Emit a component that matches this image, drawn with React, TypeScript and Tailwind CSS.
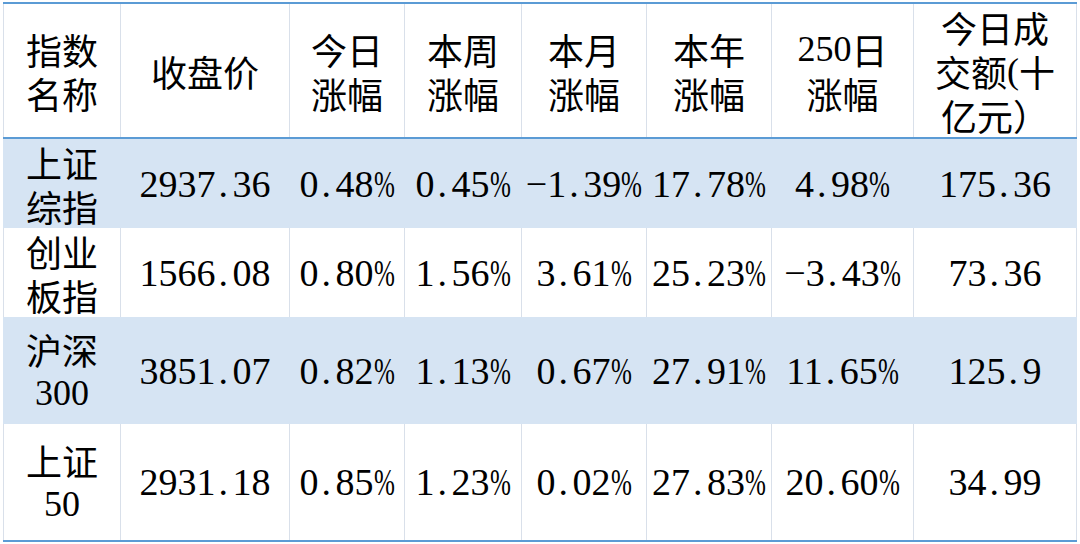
const cols = 'grid grid-cols-[117px_169px_115px_117px_125px_125px_142px_164px]';

const header: string[][] = [
  ['指数', '名称'],
  ['收盘价'],
  ['今日', '涨幅'],
  ['本周', '涨幅'],
  ['本月', '涨幅'],
  ['本年', '涨幅'],
  ['250日', '涨幅'],
  ['今日成', '交额(十', '亿元）'],
];

const rows = [
  { name: ['上证', '综指'], values: ['2937.36', '0.48%', '0.45%', '−1.39%', '17.78%', '4.98%', '175.36'], blue: true, h: 'h-[89px]' },
  { name: ['创业', '板指'], values: ['1566.08', '0.80%', '1.56%', '3.61%', '25.23%', '−3.43%', '73.36'], blue: false, h: 'h-[89px]' },
  { name: ['沪深', '300'], values: ['3851.07', '0.82%', '1.13%', '0.67%', '27.91%', '11.65%', '125.9'], blue: true, h: 'h-[107px]' },
  { name: ['上证', '50'], values: ['2931.18', '0.85%', '1.23%', '0.02%', '27.83%', '20.60%', '34.99'], blue: false, h: 'h-[118px] border-b-2 border-b-[#5b9bd5]' },
];

// split latin runs into serif spans so digits keep the serif look
function Mixed({ text }: { text: string }) {
  const parts = text.split(/([0-9.()%−-]+)/).filter(Boolean);
  return (
    <>
      {parts.map((p, i) =>
        /[0-9.()%−-]/.test(p) ? (
          <span key={i} className="inline-block leading-[44px] font-['Liberation_Serif',serif]">{p}</span>
        ) : (
          <span key={i} className="inline-block leading-[44px] font-['Noto_Sans_CJK_SC',sans-serif]">{p}</span>
        )
      )}
    </>
  );
}

// numbers drawn like a half-width song font: wide period, narrow percent sign
function Num({ value }: { value: string }) {
  return (
    <span className="font-['Liberation_Serif',serif] text-[38px] leading-none whitespace-nowrap">
      {value.split('').map((c, i) => {
        if (c === '.') return <span key={i} className="inline-block w-[17px] pl-[3px]">.</span>;
        if (c === '%')
          return (
            <span key={i} className="inline-block w-[21px]">
              <span className="inline-block scale-x-[0.66] origin-left">%</span>
            </span>
          );
        return <span key={i}>{c}</span>;
      })}
    </span>
  );
}

function Lines({ lines }: { lines: string[] }) {
  return (
    <div className="flex flex-col text-[36px] leading-[44px]">
      {lines.map((l, i) => (
        <div key={i} className="h-[44px] flex items-center justify-center whitespace-nowrap">
          <Mixed text={l} />
        </div>
      ))}
    </div>
  );
}

export default function App() {
  return (
    <div className="w-[1080px] h-[544px] bg-white pt-[2px] pl-[3px] overflow-hidden text-black font-['Liberation_Serif','Noto_Sans_CJK_SC',serif]">
      <div className="w-[1074px]">
        <div className={`${cols} h-[137px] border-y-2 border-[#5b9bd5]`}>
          {header.map((h, i) => (
            <div
              key={i}
              className={`flex items-center justify-center border-l border-[#d9e0ea] ${i === header.length - 1 ? 'border-r' : ''}`}
            >
              <Lines lines={h} />
            </div>
          ))}
        </div>
        {rows.map((r, ri) => (
          <div key={ri} className={`${cols} ${r.h} ${r.blue ? 'bg-[#d6e4f3]' : 'bg-white'}`}>
            <div className={`flex items-center justify-center border-l ${r.blue ? 'border-[#d6e4f3]' : 'border-[#d9e0ea]'}`}>
              <Lines lines={r.name} />
            </div>
            {r.values.map((v, vi) => (
              <div
                key={vi}
                className={`flex items-center justify-center border-l ${r.blue ? 'border-[#d6e4f3]' : 'border-[#d9e0ea]'} ${vi === r.values.length - 1 ? 'border-r' : ''}`}
              >
                <Num value={v} />
              </div>
            ))}
          </div>
        ))}
      </div>
    </div>
  );
}
